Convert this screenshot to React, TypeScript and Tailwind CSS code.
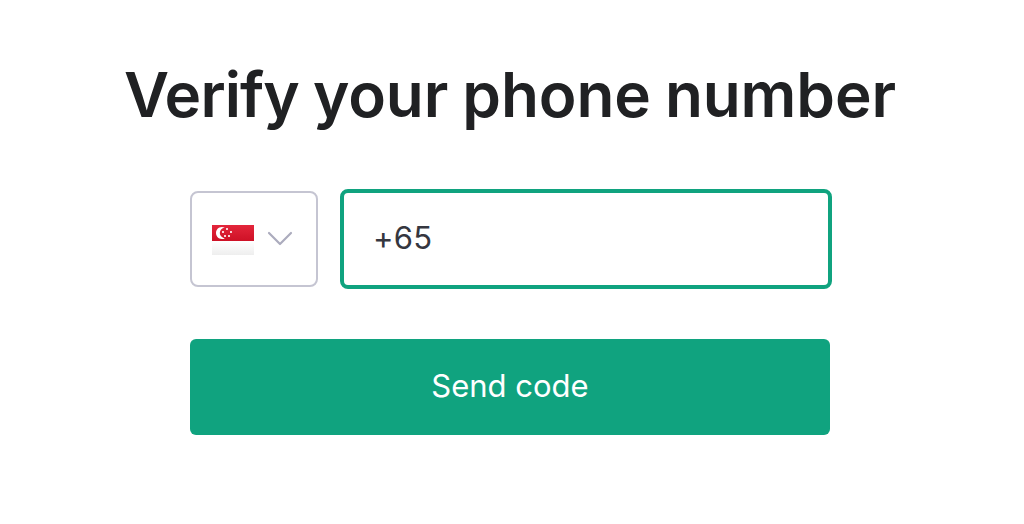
import { useState } from "react";

function App() {
  const [phone, setPhone] = useState("+65");

  return (
    <main className="h-[524px] w-full bg-white pt-[55px] font-[Inter,sans-serif] text-[#202123]">
      <h1 className="pr-1 text-center text-[62px] leading-[80px] font-semibold tracking-[-0.1px] whitespace-nowrap [word-spacing:-1.4px]">
        <span className="tracking-[-0.9px]">Verify</span> your phone number
      </h1>

      <form
        className="ml-[190px] w-[642px] pt-[54px]"
        onSubmit={(event) => event.preventDefault()}
      >
        <div className="flex items-center justify-between">
          <button
            type="button"
            aria-label="Select country"
            className="flex h-24 w-32 items-center rounded-lg border-2 border-[#c5c5d2] bg-white pt-0.5 pl-5"
          >
            <SingaporeFlag />
            <Chevron />
          </button>
          <input
            type="tel"
            aria-label="Phone number"
            value={phone}
            onChange={(event) => setPhone(event.target.value)}
            className="h-[100px] w-[492px] rounded-lg border-4 border-[#10a37f] bg-white px-[29px] pb-1 text-[31px] tracking-[0.2px] text-[#353740] outline-none"
          />
        </div>

        <button
          type="submit"
          className="mt-[50px] flex h-24 w-[640px] items-center justify-center rounded-md bg-[#10a37f] pb-0.5 text-[31px] text-white"
        >
          Send code
        </button>
      </form>
    </main>
  );
}

function SingaporeFlag() {
  return (
    <svg width="42" height="30" viewBox="0 0 42 30" className="shrink-0">
      <defs>
        <linearGradient id="flag-red" x1="0" y1="0" x2="0" y2="1">
          <stop offset="0" stopColor="#e3263b" />
          <stop offset="1" stopColor="#ce1126" />
        </linearGradient>
        <linearGradient id="flag-white" x1="0" y1="0" x2="0" y2="1">
          <stop offset="0" stopColor="#ffffff" />
          <stop offset="1" stopColor="#eeeeee" />
        </linearGradient>
      </defs>
      <rect width="42" height="16" fill="url(#flag-red)" />
      <rect y="16" width="42" height="14" fill="url(#flag-white)" />
      <path
        d="M12.8 2.6C7.8 0.6 4 4 4 8S7.8 15.4 12.8 13.4C9.6 12.6 7.8 10.4 7.8 8S9.6 3.4 12.8 2.6Z"
        fill="#ffffff"
      />
      <g fill="#ffffff" fillOpacity="0.8">
        <rect x="14" y="3" width="2" height="2" />
        <rect x="10" y="6" width="2" height="2" />
        <rect x="18" y="6" width="2" height="2" />
        <rect x="12" y="10" width="2" height="2" />
        <rect x="16" y="10" width="2" height="2" />
      </g>
    </svg>
  );
}

function Chevron() {
  return (
    <svg
      width="26"
      height="16"
      viewBox="0 0 26 16"
      fill="none"
      stroke="#acacbe"
      strokeWidth="2.2"
      strokeLinecap="round"
      strokeLinejoin="round"
      className="mb-0.5 ml-[13px] shrink-0"
    >
      <path d="M2 2L13 13L24 2" />
    </svg>
  );
}

export default App;
